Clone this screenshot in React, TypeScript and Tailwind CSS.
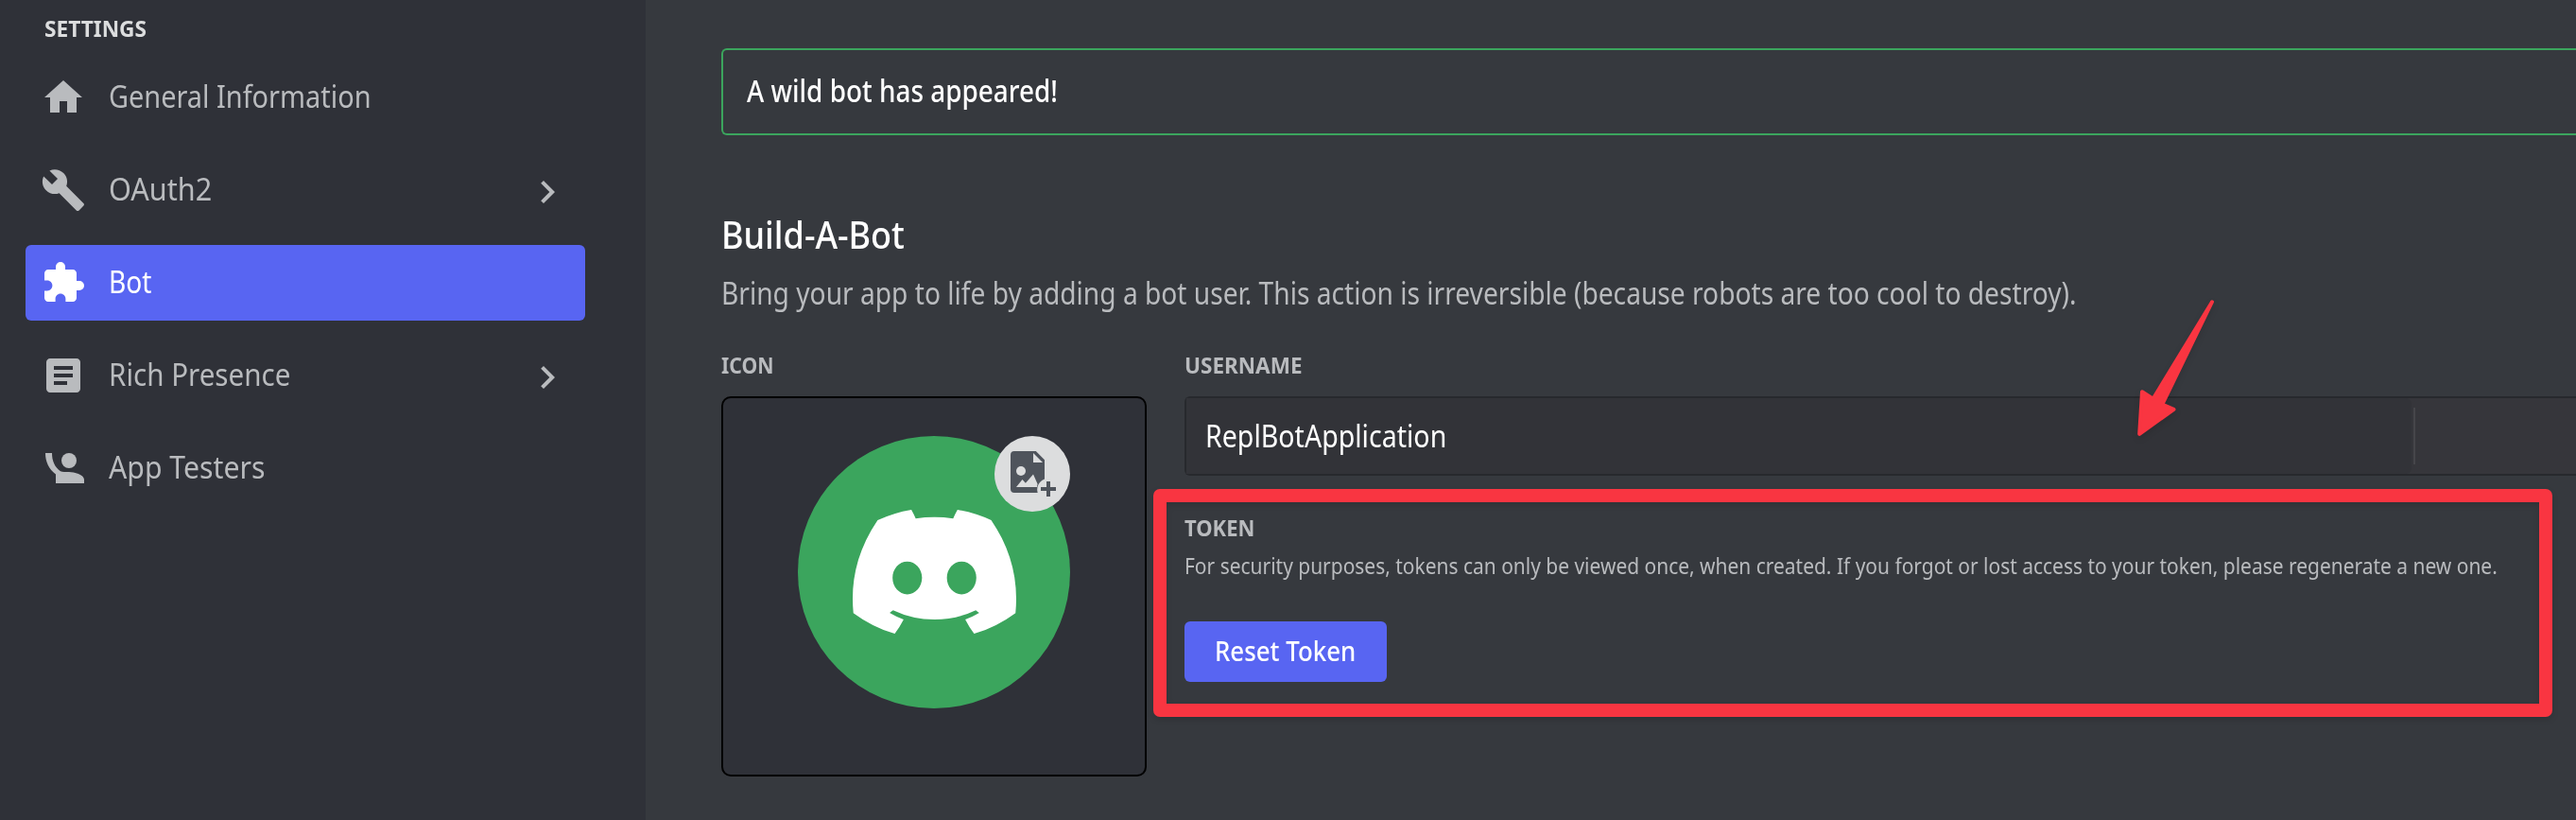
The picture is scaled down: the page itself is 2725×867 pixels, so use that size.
import type { ReactNode } from "react";
import { MdArticle, MdBuild, MdChevronRight, MdExtension, MdHome } from "react-icons/md";

function TesterIcon({ className }: { className?: string }) {
  return (
    <svg viewBox="0 0 24 24" fill="currentColor" className={className}>
      <circle cx="15" cy="8" r="4" />
      <path d="M2.5 4H6c0 4.2 1.4 7.4 4.5 9.6C11.6 14 13.2 14 15 14c2.67 0 8 1.34 8 4v2H8v-4.8C4.4 12.6 2.5 8.6 2.5 4z" />
    </svg>
  );
}

function NavItem({
  icon,
  children,
  active,
  expandable,
}: {
  icon: ReactNode;
  children: ReactNode;
  active?: boolean;
  expandable?: boolean;
}) {
  return (
    <li
      className={
        active
          ? "flex h-20 items-center rounded-md bg-[#5865f2] pl-4 text-white"
          : "flex h-20 items-center rounded-md pl-4 text-[#b9bbbe]"
      }
    >
      {icon}
      <span className="mb-[3px] ml-6 flex-1 whitespace-nowrap text-[32px] leading-[43px]">{children}</span>
      {expandable && <MdChevronRight className="mt-[3px] mr-4 size-12" />}
    </li>
  );
}

function Sidebar() {
  return (
    <aside className="w-[683px] shrink-0 bg-[#2f3138] pl-[27px] pt-[13px]">
      <h2 className="pl-5 text-2xl leading-[33px] font-bold text-[#dcddde]">
        <span className="inline-block origin-left scale-x-[0.945]">SETTINGS</span>
      </h2>
      <ul className="mt-[17px] flex w-[592px] flex-col gap-[18px]">
        <NavItem icon={<MdHome className="size-12" />}>
          <span className="inline-block origin-left scale-x-[0.903]">General Information</span>
        </NavItem>
        <NavItem icon={<MdBuild className="size-12" />} expandable>
          <span className="inline-block origin-left scale-x-[0.957]">OAuth2</span>
        </NavItem>
        <NavItem icon={<MdExtension className="size-12" />} active>
          <span className="inline-block origin-left scale-x-[0.88]">Bot</span>
        </NavItem>
        <NavItem icon={<MdArticle className="size-12" />} expandable>
          <span className="inline-block origin-left scale-x-[0.924]">Rich Presence</span>
        </NavItem>
        <NavItem icon={<TesterIcon className="size-12" />}>
          <span className="inline-block origin-left scale-x-[0.944]">App Testers</span>
        </NavItem>
      </ul>
    </aside>
  );
}

function DiscordMark() {
  return (
    <svg viewBox="0 0 127.14 96.36" className="w-[173px]" fill="#fff">
      <path d="M107.7,8.07A105.15,105.15,0,0,0,81.47,0a72.06,72.06,0,0,0-3.36,6.83A97.68,97.68,0,0,0,49,6.83,72.37,72.37,0,0,0,45.64,0,105.89,105.89,0,0,0,19.39,8.09C2.79,32.65-1.71,56.6.54,80.21h0A105.73,105.73,0,0,0,32.71,96.36,77.7,77.7,0,0,0,39.6,85.25a68.42,68.42,0,0,1-10.85-5.18c.91-.66,1.8-1.34,2.66-2a75.57,75.57,0,0,0,64.32,0c.87.71,1.76,1.39,2.66,2a68.68,68.68,0,0,1-10.87,5.19,77,77,0,0,0,6.89,11.1A105.25,105.25,0,0,0,126.6,80.22h0C129.24,52.84,122.09,29.11,107.7,8.07ZM42.45,65.69C36.18,65.69,31,60,31,53s5-12.74,11.43-12.74S54,46,53.89,53,48.84,65.69,42.45,65.69Zm42.24,0C78.41,65.69,73.25,60,73.25,53s5-12.74,11.44-12.74S96.23,46,96.12,53,91.08,65.69,84.69,65.69Z" />
    </svg>
  );
}

function AddImageIcon() {
  return (
    <svg viewBox="0 0 48 48" className="size-12" fill="#4f545c">
      <path d="M4 0h22.8L36 9.2v20.2A12 12 0 0 0 28.7 44H4a4 4 0 0 1-4-4V4a4 4 0 0 1 4-4z" />
      <g fill="#dcddde">
        <path d="M24 2l10 10H24z" />
        <circle cx="11" cy="21" r="5" />
        <path d="M6 38l6.5-8 3.4 3.8L24 24.4l4.6 10.4a12 12 0 0 0-.5 3.2z" />
      </g>
      <path d="M38 32h4v6h6v4h-6v6h-4v-6h-6v-4h6z" />
    </svg>
  );
}

function AvatarField() {
  return (
    <div className="w-[450px] shrink-0">
      <h4 className="text-2xl leading-[33px] font-bold text-[#b9bbbe]">
        <span className="inline-block origin-left scale-x-[0.885]">ICON</span>
      </h4>
      <div className="mt-[17px] flex h-[402px] justify-center rounded-[10px] border-2 border-black bg-[#2f3138] pt-10">
        <div className="relative flex size-72 items-center justify-center rounded-full bg-[#3ba55d]">
          <DiscordMark />
          <div className="absolute top-0 right-0 flex size-20 items-start rounded-full bg-[#dcddde] pt-4 pl-[17px]">
            <AddImageIcon />
          </div>
        </div>
      </div>
    </div>
  );
}

function BotFields() {
  return (
    <div className="min-w-0 flex-1">
      <h4 className="text-2xl leading-[33px] font-bold text-[#b9bbbe]">
        <span className="inline-block origin-left scale-x-[0.938]">USERNAME</span>
      </h4>
      <div className="mt-[17px] flex h-[84px] items-center rounded-l-md border-y-2 border-l-2 border-[#27292d] bg-[#36363b]">
        <div className="flex h-full w-[1296px] items-center rounded-r-md bg-[#323338] pl-5">
          <span className="mb-0.5 inline-block origin-left scale-x-[0.892] text-[32px] leading-[43px] text-white">
            ReplBotApplication
          </span>
        </div>
        <div className="ml-0.5 h-[60px] w-0.5 bg-[#46464a]" />
      </div>
      <h4 className="mt-[38px] text-2xl leading-[33px] font-bold text-[#b9bbbe]">
        <span className="inline-block origin-left scale-x-[0.915]">TOKEN</span>
      </h4>
      <p className="mt-[7px] w-max origin-left scale-x-[0.873] text-2xl leading-[33px] whitespace-nowrap text-[#b9bbbe]">
        For security purposes, tokens can only be viewed once, when created. If you forgot or lost access to your token,
        please regenerate a new one.
      </p>
      <button className="mt-[43px] flex h-16 w-[214px] items-center rounded-md bg-[#5865f2] pl-8 text-[29px] leading-10 font-medium whitespace-nowrap text-white">
        <span className="mb-0.5 inline-block origin-left scale-x-[0.892]">Reset Token</span>
      </button>
    </div>
  );
}

function Annotations() {
  return (
    <>
      <div className="absolute top-[517px] left-[1220px] h-[241px] w-[1480px] rounded-[7px] border-[14px] border-[#f93541] drop-shadow-md" />
      <svg viewBox="0 0 130 170" className="absolute top-[310px] left-[2230px] h-[170px] w-[130px] drop-shadow-md">
        <path
          d="M110 9.2L47.6 111.7L36 104.3L33.2 149L69.5 122.8L57.3 117.6z"
          fill="#f93541"
          stroke="#f93541"
          strokeWidth="4"
          strokeLinejoin="round"
        />
      </svg>
    </>
  );
}

export default function App() {
  return (
    <div className="relative flex h-[867px] w-[2725px] overflow-hidden bg-[#36393e] font-['Noto_Sans',sans-serif]">
      <Sidebar />
      <main className="min-w-0 flex-1 pt-[51px] pl-20">
        <div className="flex h-[92px] items-center rounded-l-md border-y-2 border-l-2 border-[#3ba55d] pl-[25px]">
          <span className="mb-1 inline-block origin-left scale-x-[0.872] text-[32px] leading-[43px] font-medium text-white">
            A wild bot has appeared!
          </span>
        </div>
        <h3 className="mt-20 text-[40px] leading-[49px] font-medium text-white">
          <span className="inline-block origin-left scale-x-[0.9]">Build-A-Bot</span>
        </h3>
        <p className="mt-4 w-max origin-left scale-x-[0.88] text-[32px] leading-[43px] whitespace-nowrap text-[#b9bbbe]">
          Bring your app to life by adding a bot user. This action is irreversible (because robots are too cool to
          destroy).
        </p>
        <div className="mt-[38px] flex gap-10">
          <AvatarField />
          <BotFields />
        </div>
      </main>
      <Annotations />
    </div>
  );
}
